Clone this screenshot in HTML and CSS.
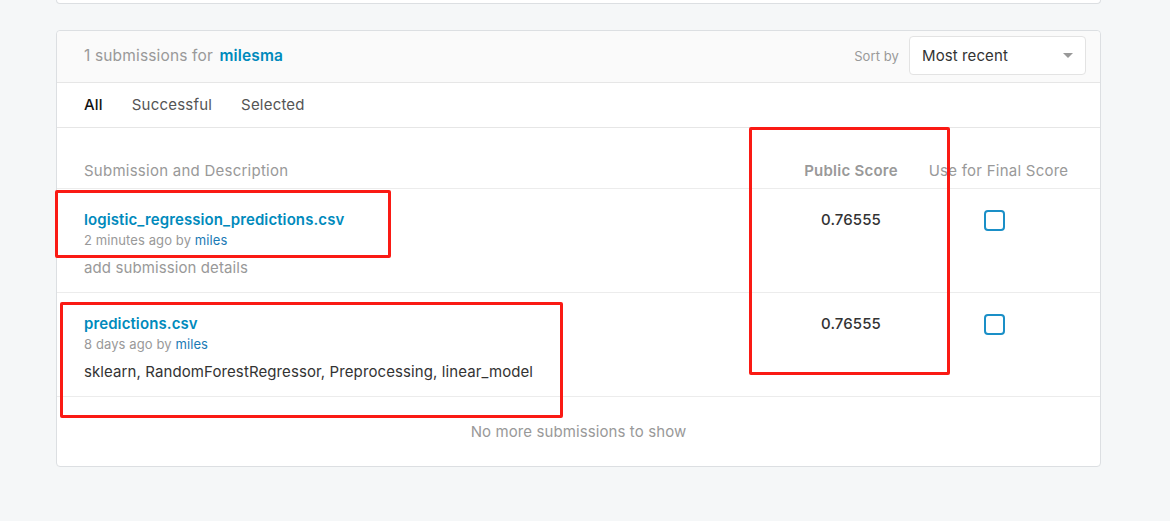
FILE: index.html
```html
<!DOCTYPE html>
<html>
<head>
<meta charset="utf-8">
<link rel="stylesheet" href="styles.css">
</head>
<body>
<div class="page">
  <div class="top-card"></div>
  <div class="card">
    <div class="card-header">
      <div class="count"><span class="num">1</span> submissions for <a class="user">milesma</a></div>
      <div class="sort">
        <span class="sort-label">Sort by</span>
        <div class="select">
          <span>Most recent</span>
          <span class="caret"></span>
        </div>
      </div>
    </div>
    <div class="tabs">
      <span class="tab active">All</span>
      <span class="tab">Successful</span>
      <span class="tab">Selected</span>
    </div>
    <div class="row head">
      <div class="c1">Submission and Description</div>
      <div class="c2 strong">Public Score</div>
      <div class="c3">Use for Final Score</div>
    </div>
    <div class="row sub">
      <div class="c1">
        <a class="file">logistic_regression_predictions.csv</a>
        <div class="meta">2 minutes ago by <a class="by">miles</a></div>
        <div class="desc muted">add submission details</div>
      </div>
      <div class="c2 score">0.76555</div>
      <div class="c3"><span class="check"></span></div>
    </div>
    <div class="row sub">
      <div class="c1">
        <a class="file">predictions.csv</a>
        <div class="meta">8 days ago by <a class="by">miles</a></div>
        <div class="desc">sklearn, RandomForestRegressor, Preprocessing, linear_model</div>
      </div>
      <div class="c2 score">0.76555</div>
      <div class="c3"><span class="check"></span></div>
    </div>
    <div class="footer">No more submissions to show</div>
  </div>
  <div class="mark mark1"></div>
  <div class="mark mark2"></div>
  <div class="mark mark3"></div>
</div>
</body>
</html>
```
FILE: styles.css
```css
* { box-sizing: border-box; }
html, body { margin: 0; padding: 0; }
body {
  background: #f5f7f8;
  font-family: Inter, "Liberation Sans", sans-serif;
  color: #333;
  width: 1170px;
  height: 521px;
  overflow: hidden;
  letter-spacing: 0.1px;
}
.page {
  position: relative;
  padding-left: 56px;
  width: 1170px;
  height: 521px;
}
.top-card {
  width: 1045px;
  height: 4px;
  background: #fff;
  border: 1px solid #dcdfe2;
  border-top: none;
  border-radius: 0 0 4px 4px;
}
.card {
  margin-top: 26px;
  width: 1045px;
  background: #fff;
  border: 1px solid #dcdfe2;
  border-radius: 4px;
}
.card-header {
  height: 52px;
  background: #fafafa;
  border-bottom: 1px solid #e6e6e6;
  border-radius: 4px 4px 0 0;
  display: flex;
  align-items: center;
  justify-content: space-between;
  padding: 0 14px 2px 27px;
}
.count {
  font-size: 15.5px;
  color: #999;
  letter-spacing: 0.15px;
}
.user {
  color: #008abc;
  font-weight: 600;
  margin-left: 2px;
}
.sort {
  display: flex;
  align-items: center;
  gap: 10px;
}
.sort-label {
  font-size: 13px;
  color: #999;
}
.select {
  width: 177px;
  height: 39px;
  background: #fff;
  border: 1px solid #e3e3e3;
  border-radius: 4px;
  display: flex;
  align-items: center;
  justify-content: space-between;
  padding: 0 12px 0 12px;
  font-size: 15px;
  color: #333;
}
.caret {
  width: 0;
  height: 0;
  border-left: 5px solid transparent;
  border-right: 5px solid transparent;
  border-top: 5px solid #999;
}
.tabs {
  height: 45px;
  display: flex;
  align-items: center;
  gap: 29px;
  padding: 0 0 2px 27px;
  border-bottom: 1px solid #e6e6e6;
}
.tab {
  font-size: 15px;
  color: #555;
  letter-spacing: 0.2px;
}
.tab.active {
  color: #111;
  font-weight: 500;
}
.row {
  display: grid;
  grid-template-columns: 1fr 152px 143px;
  padding: 0 30px 0 27px;
  border-bottom: 1px solid #ececec;
}
.row.head {
  height: 61px;
  align-items: end;
  padding-bottom: 8px;
  font-size: 15px;
  color: #999;
  letter-spacing: 0.25px;
}
.row.head .c2, .row.head .c3 { text-align: center; }
.strong { font-weight: 600; }
.row.sub {
  height: 104px;
  padding-top: 21px;
}
.file {
  display: block;
  color: #008abc;
  font-weight: 600;
  font-size: 15px;
  line-height: 20px;
}
.meta {
  font-size: 13px;
  color: #999;
  line-height: 18px;
  margin-top: 1px;
}
.by { color: #1a7ab5; }
.desc {
  font-size: 15px;
  color: #333;
  line-height: 20px;
  margin-top: 9px;
}
.desc.muted { color: #999; }
.score {
  text-align: center;
  font-size: 15px;
  font-weight: 500;
  color: #333;
  line-height: 20px;
}
.c3 { text-align: center; }
.check {
  display: inline-block;
  width: 21px;
  height: 21px;
  border: 2px solid #1a8fc7;
  border-radius: 4px;
  margin-right: 9px;
}
.footer {
  height: 69px;
  display: flex;
  align-items: center;
  justify-content: center;
  font-size: 15px;
  color: #999;
}
.mark {
  position: absolute;
  border: 3px solid #fa1a14;
  border-radius: 2px;
}
.mark1 { left: 55px; top: 190px; width: 336px; height: 68px; }
.mark2 { left: 60px; top: 302px; width: 503px; height: 116px; }
.mark3 { left: 749px; top: 127px; width: 201px; height: 248px; }
```
